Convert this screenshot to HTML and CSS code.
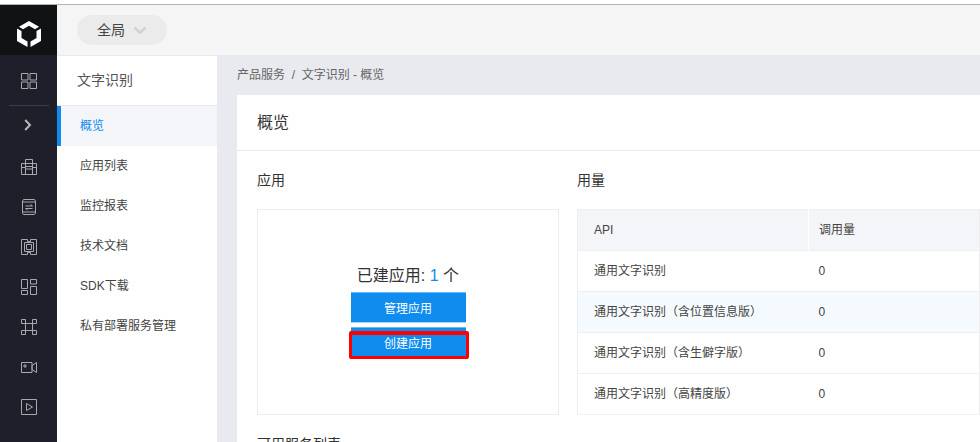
FILE: index.html
```html
<!DOCTYPE html>
<html lang="zh-CN">
<head>
<meta charset="utf-8">
<title>文字识别 - 概览</title>
<link rel="stylesheet" href="styles.css">
</head>
<body>
<div class="shot">
  <aside class="rail">
    <div class="logo">
      <svg width="24" height="26" viewBox="0 0 24 26"><path d="M12 0 22 5.700 18 8.300 12 4.800 6 8.300 2 5.700Z M0 7.500 4.500 10 4.500 17 10.500 20.500 10.500 26 0 20Z M24 7.500 19.500 10 19.500 17 13.500 20.500 13.500 26 24 20Z" fill="#fff"/></svg>
    </div>
    <div class="rail-item rail-first">
      <svg class="ic" viewBox="0 0 16 16"><path d="M.5.500h6.500v6.500H.500zM9 .500h6.500v6.500H9zM.500 9h6.500v6.500H.500zM9 9h6.500v6.500H9z"/></svg>
    </div>
    <div class="rail-sep"></div>
    <div class="rail-item rail-toggle">
      <svg width="8" height="12" viewBox="0 0 8 12"><path d="M1.200 1 6 6l-4.800 5" fill="none" stroke="#b6b6ba" stroke-width="2"/></svg>
    </div>
    <div class="rail-item">
      <svg class="ic" viewBox="0 0 16 16"><path d="M.500 4.500h15v11H.500zM4.500 15.500V.500h7v15M4.500 7.500h7M4.500 10h7M.500 8.500h4M11.500 8.500h4"/></svg>
    </div>
    <div class="rail-item">
      <svg class="ic" viewBox="0 0 16 16"><path d="M2.500.500h11l1 1.500v12l-1 1.500h-11l-1-1.500V2zM1.500 3h13M1.500 13h13M4.500 7h7l-2-1.500M11.500 9.500h-7l2 1.500"/></svg>
    </div>
    <div class="rail-item">
      <svg class="ic" viewBox="0 0 16 16"><path d="M.500.500h6v2h3v-2h6v15h-6v-2h-3v2h-6zM3.500 3.500h9v9h-9zM5.500 5.500h5v5h-5z"/></svg>
    </div>
    <div class="rail-item">
      <svg class="ic" viewBox="0 0 16 16"><path d="M.500.500h6v9h-6zM9.500.500h6v4.500h-6zM.500 11.500h6v4h-6zM9.500 7.500h6v8h-6z"/></svg>
    </div>
    <div class="rail-item">
      <svg class="ic" viewBox="0 0 16 16"><path d="M.500.500h4v4h-4zM11.500.500h4v4h-4zM.500 11.500h4v4h-4zM11.500 11.500h4v4h-4zM4.500 4.500h7v7h-7z"/></svg>
    </div>
    <div class="rail-item">
      <svg class="ic ic-wide" viewBox="0 0 16 11"><path d="M.500.500h10.500v10H.500zM15.500.500v10L11 7.500v-4zM3 3h2v2H3z"/></svg>
    </div>
    <div class="rail-item">
      <svg class="ic" viewBox="0 0 16 16"><path d="M.500.500h15v15H.500zM5.500 4.500l6 3.500-6 3.500z"/></svg>
    </div>
  </aside>

  <div class="body">
    <header class="topbar">
      <div class="scope">
        <span class="scope-label">全局</span>
        <svg width="14" height="9" viewBox="0 0 14 9"><path d="M1.500 1.500 7 6.700l5.500-5.200" fill="none" stroke="#d2d2d2" stroke-width="2.600"/></svg>
      </div>
    </header>

    <div class="under">
      <nav class="subnav">
        <div class="subnav-title">文字识别</div>
        <a class="subnav-link active">概览</a>
        <a class="subnav-link">应用列表</a>
        <a class="subnav-link">监控报表</a>
        <a class="subnav-link">技术文档</a>
        <a class="subnav-link">SDK下载</a>
        <a class="subnav-link">私有部署服务管理</a>
      </nav>

      <main class="main">
        <div class="crumbs">产品服务&nbsp;&nbsp;/&nbsp;&nbsp;文字识别 - 概览</div>
        <section class="card">
          <h1 class="card-title">概览</h1>
          <div class="card-body">
            <div class="columns">
              <div class="col-app">
                <h2 class="section-title">应用</h2>
                <div class="app-box">
                  <p class="app-count">已建应用: <em>1</em> 个</p>
                  <button class="btn">管理应用</button>
                  <button class="btn btn-marked">创建应用</button>
                </div>
              </div>
              <div class="col-usage">
                <h2 class="section-title">用量</h2>
                <table class="usage">
                  <thead>
                    <tr><th class="col-api">API</th><th class="col-calls">调用量</th></tr>
                  </thead>
                  <tbody>
                    <tr><td class="cell-name">通用文字识别</td><td>0</td></tr>
                    <tr class="hover"><td class="cell-name">通用文字识别（含位置信息版）</td><td>0</td></tr>
                    <tr><td class="cell-name">通用文字识别（含生僻字版）</td><td>0</td></tr>
                    <tr><td class="cell-name">通用文字识别（高精度版）</td><td>0</td></tr>
                  </tbody>
                </table>
              </div>
            </div>
            <h2 class="section-title section-next">可用服务列表</h2>
          </div>
        </section>
      </main>
    </div>
  </div>
</div>
</body>
</html>
```

FILE: styles.css
```css
*, *::before, *::after { box-sizing: border-box; }
html, body { margin: 0; padding: 0; height: 442px; overflow: hidden; background: #fff; }
body { font-family: "Liberation Sans", "Noto Sans CJK SC", sans-serif; color: #333; font-size: 12px; }

.shot { width: 980px; height: 442px; padding-top: 4px; display: flex; overflow: hidden; }
.shot::before { content: ""; position: absolute; left: 0; top: 4px; width: 980px; height: 1px; background: #b4b4b4; z-index: 2; }

.rail { width: 57px; flex: none; background: #1e1f2b; display: flex; flex-direction: column; align-items: center; }
.logo { width: 100%; height: 51px; flex: none; background: #111214; display: flex; align-items: center; justify-content: center; padding-top: 9px; }
.rail-item { width: 100%; height: 40px; flex: none; display: flex; align-items: center; justify-content: center; }
.rail-first { height: 50px; padding-top: 2px; }
.rail-sep { width: 40px; height: 1px; background: #3b3c47; flex: none; }
.rail-toggle { height: 38px; margin-bottom: 3px; padding-right: 2px; }
.ic { width: 16px; height: 16px; fill: none; stroke: #a8a8ae; stroke-width: 1; display: block; }
.ic-wide { height: 11px; }

.body { flex: 1; min-width: 0; display: flex; flex-direction: column; }
.topbar { height: 52px; flex: none; background: #f5f5f5; border-bottom: 1px solid #e8eaef; padding: 11px 0 0 20px; }
.scope { width: 90px; height: 30px; border-radius: 15px; background: #ebebeb; display: flex; align-items: center; gap: 8px; padding-left: 20px; font-size: 14px; color: #444; line-height: 1; }

.under { flex: 1; display: flex; min-height: 0; }
.subnav { width: 160px; flex: none; background: #fff; }
.subnav-title { height: 50px; border-bottom: 1px solid #e8eaef; padding-left: 20px; font-size: 14px; line-height: 48px; color: #555; }
.subnav-link { display: block; height: 40px; line-height: 40px; padding-left: 23px; font-size: 12px; color: #444; }
.subnav-link.active { background: #f4f5f9; color: #108cee; border-left: 4px solid #108cee; padding-left: 19px; }

.main { flex: 1; min-width: 0; background: #e8eaef; padding-left: 20px; }
.crumbs { height: 39px; line-height: 38px; font-size: 12px; color: #666; }
.card { background: #fff; height: 400px; }
.card-title { margin: 0; height: 56px; border-bottom: 1px solid #e8eaef; padding-left: 20px; font-size: 16px; font-weight: 400; line-height: 55px; color: #333; }
.card-body { padding: 20px 0 0 20px; }
.columns { display: flex; gap: 18px; }
.col-app { width: 302px; flex: none; }
.col-usage { flex: 1; min-width: 0; }
.section-title { margin: 0 0 20px; font-size: 14px; line-height: 18px; font-weight: 400; color: #333; }
.section-next { margin-top: 20px; }

.app-box { height: 206px; border: 1px solid #eee; display: flex; flex-direction: column; align-items: center; padding-top: 55px; }
.app-count { margin: 0 0 5px; font-size: 16px; line-height: 22px; color: #333; }
.app-count em { font-style: normal; color: #108cee; }
.btn { display: block; width: 115px; height: 31px; border: 0; border-top: 1px solid #6cb8f5; border-bottom: 1px solid #a8d5f8; background: #108cee; color: #fff; font: inherit; font-size: 12px; padding: 0; }
.btn + .btn { margin-top: 4px; position: relative; }
.btn-marked::after { content: ""; position: absolute; left: -2px; right: -3px; top: 3px; height: 28px; border-style: solid; border-color: #f00; border-width: 4px 3px 3px; border-radius: 2px; }

.usage { width: 100%; border-collapse: collapse; table-layout: fixed; border: 1px solid #eee; font-size: 12px; }
.usage th { height: 41px; background: #f4f5f9; font-weight: 400; text-align: left; padding: 0 0 0 10px; color: #444; border-bottom: 1px solid #eef0f4; }
.usage th.col-api { width: 231px; padding-left: 16px; border-right: 1px solid #fff; }
.usage th.col-calls { padding-bottom: 3px; }
.usage td { height: 41px; padding: 0 0 0 10px; color: #444; border-bottom: 1px solid #eef0f4; }
.usage td.cell-name { padding: 0 0 3px 16px; }
.usage tr.hover td { background: #f5fafe; }
```
